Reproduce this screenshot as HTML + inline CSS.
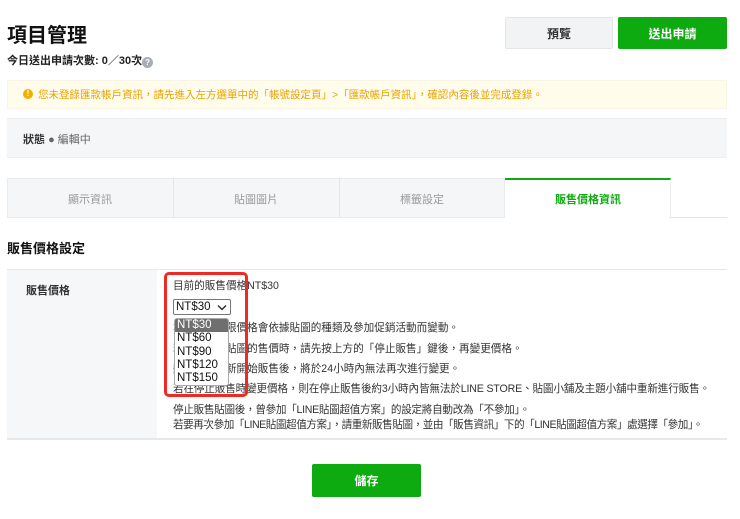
<!DOCTYPE html>
<html><head><meta charset="utf-8"><style>
*{margin:0;padding:0;box-sizing:border-box}
body{width:740px;height:519px;background:#fff;font-family:"Liberation Sans","Noto Sans CJK TC",sans-serif;color:#333;position:relative;overflow:hidden}
.a{position:absolute;white-space:nowrap}
.btn{position:absolute;display:flex;align-items:center;justify-content:center;font-size:12px;font-weight:bold;border-radius:2px}
.t{font-size:10.6px;color:#333;line-height:14px}
</style></head><body>
<div class="a" style="left:7px;top:19px;font-size:20px;font-weight:bold;color:#111">項目管理</div>
<div class="a" style="left:7px;top:52px;font-size:11px;color:#222;font-weight:bold">今日送出申請次數: 0／30次<span style="display:inline-block;width:11px;height:11px;border-radius:50%;background:#a9adb4;color:#fff;font-size:8px;text-align:center;line-height:11px;vertical-align:-1px">?</span></div>
<div class="btn" style="left:505px;top:17px;width:108px;height:32px;background:#f2f3f5;border:1px solid #e3e5e8;color:#333">預覽</div>
<div class="btn" style="left:618px;top:17px;width:109px;height:32px;background:#0dab10;color:#fff">送出申請</div>
<div class="a" style="left:7px;top:80px;width:720px;height:29px;background:#fffcec;border:1px solid #f9f5e2"></div>
<div class="a" style="left:23px;top:89px;width:10px;height:10px;border-radius:50%;background:#f2b100;color:#fff;font-size:8px;text-align:center;line-height:10px;font-weight:bold">!</div>
<div class="a" style="left:38px;top:87px;font-size:10.5px;color:#e8a200">您未登錄匯款帳戶資訊，請先進入左方選單中的「帳號設定頁」>「匯款帳戶資訊」，確認內容後並完成登錄。</div>
<div class="a" style="left:7px;top:118px;width:720px;height:40px;background:#f5f6f7;border-top:1px solid #eceef0;border-bottom:1px solid #eceef0"></div>
<div class="a" style="left:23px;top:131px;font-size:11px;font-weight:bold;color:#333">狀態 <span style="color:#666;font-weight:normal">● 編輯中</span></div>
<div class="a" style="left:7px;top:178px;width:498px;height:40px;background:#f5f6f7;border:1px solid #e8eaec"></div>
<div class="a" style="left:173px;top:178px;width:1px;height:40px;background:#e3e5e8"></div>
<div class="a" style="left:339px;top:178px;width:1px;height:40px;background:#e3e5e8"></div>
<div class="a" style="left:505px;top:178px;width:166px;height:41px;background:#fff;border-top:2px solid #0dab10;border-right:1px solid #e8eaec"></div>
<div class="a" style="left:671px;top:217px;width:56px;height:1px;background:#e3e5e8"></div>
<div class="a" style="left:7px;top:191px;width:166px;text-align:center;font-size:11px;color:#999">顯示資訊</div>
<div class="a" style="left:173px;top:191px;width:166px;text-align:center;font-size:11px;color:#999">貼圖圖片</div>
<div class="a" style="left:339px;top:191px;width:166px;text-align:center;font-size:11px;color:#999">標籤設定</div>
<div class="a" style="left:505px;top:191px;width:166px;text-align:center;font-size:11px;color:#0dab10;font-weight:bold">販售價格資訊</div>
<div class="a" style="left:7px;top:238px;font-size:13px;font-weight:bold;color:#111">販售價格設定</div>
<div class="a" style="left:7px;top:269px;width:720px;height:171px;border-top:1px solid #e6e8ea;border-bottom:2px solid #e6e8ea"></div>
<div class="a" style="left:7px;top:270px;width:150px;height:168px;background:#f6f7f8"></div>
<div class="a" style="left:26px;top:282px;font-size:11px;font-weight:bold;color:#333">販售價格</div>
<div class="a t" style="left:173px;top:279px">目前的販售價格NT$30</div>
<div class="a" style="left:173px;top:299px;width:58px;height:16px;border:1px solid #777;border-radius:2px;font-size:11.5px;line-height:14px;padding-left:2px;color:#111">NT$30<svg style="position:absolute;left:43px;top:4px" width="10" height="7" viewBox="0 0 10 7"><path d="M1 1.5 L5 5.5 L9 1.5" fill="none" stroke="#222" stroke-width="1.3"/></svg></div>
<div class="a t" style="left:173px;top:321px">本販售上下限價格會依據貼圖的種類及參加促銷活動而變動。</div>
<div class="a t" style="left:173px;top:342px">若要變更中貼圖的售價時，請先按上方的「停止販售」鍵後，再變更價格。</div>
<div class="a t" style="left:173px;top:362px">變更價格重新開始販售後，將於24小時內無法再次進行變更。</div>
<div class="a t" style="left:173px;top:382px;letter-spacing:-0.15px">若在停止販售時變更價格，則在停止販售後約3小時內皆無法於LINE STORE、貼圖小舖及主題小舖中重新進行販售。</div>
<div class="a t" style="left:173px;top:403px;letter-spacing:-0.3px">停止販售貼圖後，曾參加「LINE貼圖超值方案」的設定將自動改為「不參加」。</div>
<div class="a t" style="left:173px;top:418px;letter-spacing:-0.45px">若要再次參加「LINE貼圖超值方案」，請重新販售貼圖，並由「販售資訊」下的「LINE貼圖超值方案」處選擇「參加」。</div>
<div class="a" style="left:174px;top:318px;width:55px;height:68px;background:#fff;border:1px solid #aaa;border-radius:3px;font-size:11.5px;line-height:13.3px;color:#111;overflow:hidden">
<div style="background:#6f6f6f;color:#fff;padding-left:2px">NT$30</div>
<div style="padding-left:2px">NT$60</div><div style="padding-left:2px">NT$90</div><div style="padding-left:2px">NT$120</div><div style="padding-left:2px">NT$150</div></div>
<div class="a" style="left:164px;top:272px;width:84px;height:125px;border:3px solid #ee2a24;border-radius:5px"></div>
<div class="btn" style="left:312px;top:464px;width:109px;height:33px;background:#0dab10;color:#fff">儲存</div>
</body></html>
